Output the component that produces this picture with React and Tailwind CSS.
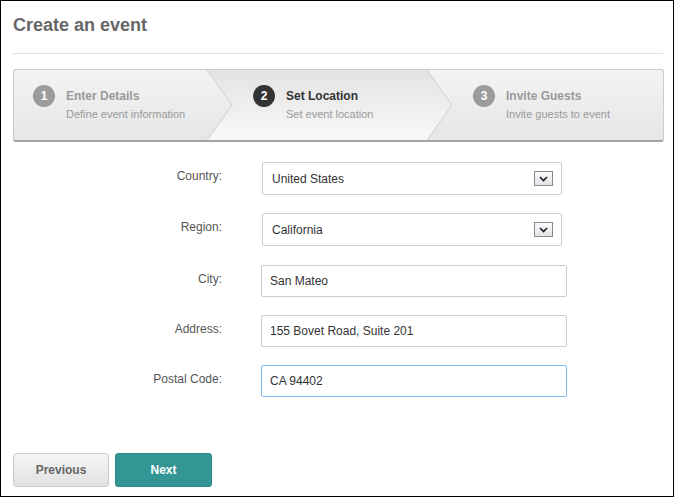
import React from "react";

const font = { fontFamily: '"Liberation Sans", Arial, sans-serif' };

function Circle({ n, dark }) {
  return (
    <div
      className={`w-[22px] h-[22px] rounded-full flex items-center justify-center text-white text-[12px] font-bold shrink-0 ${
        dark ? "bg-[#333333]" : "bg-[#9b9b9b]"
      }`}
    >
      {n}
    </div>
  );
}

function StepContent({ n, title, sub, active }) {
  return (
    <div className="flex items-start gap-[11px] pt-[15px]">
      <Circle n={n} dark={active} />
      <div className="flex flex-col">
        <div
          className={`text-[12px] font-bold leading-[22px] ${
            active ? "text-[#333333]" : "text-[#9a9a9a]"
          }`}
        >
          {title}
        </div>
        <div className="text-[11px] leading-[14px] text-[#9a9a9a]">{sub}</div>
      </div>
    </div>
  );
}

function SelectBox({ value }) {
  return (
    <div className="w-[300px] h-[33px] border border-[#cccccc] rounded-[2px] bg-white flex items-center justify-between pl-[9px] pr-[8px] ml-[1px]">
      <span className="text-[12px] text-[#333333]">{value}</span>
      <div className="w-[19px] h-[15px] border border-[#8a8a8a] bg-gradient-to-b from-[#fbfbfb] to-[#e4e4e4] flex items-center justify-center">
        <svg width="9" height="6" viewBox="0 0 9 6">
          <path d="M1 1 L4.5 4.5 L8 1" fill="none" stroke="#1a1a2e" strokeWidth="1.6" />
        </svg>
      </div>
    </div>
  );
}

function TextBox({ value, focused }) {
  return (
    <div
      className={`w-[306px] h-[32px] border rounded-[2px] bg-white flex items-center pl-[8px] ${
        focused ? "border-[#7fbcf3]" : "border-[#cccccc]"
      }`}
    >
      <span className="text-[12px] text-[#333333]">{value}</span>
    </div>
  );
}

function Row({ label, children, className = "" }) {
  return (
    <div className={`flex ${className}`}>
      <div className="w-[209px] text-right text-[12px] leading-[14px] pt-[7px] text-[#555555]">
        {label}
      </div>
      <div className="ml-[39px]">{children}</div>
    </div>
  );
}

export default function App() {
  return (
    <div style={font} className="w-[674px] h-[497px] border border-black bg-white px-[12px] pt-[13px] flex flex-col">
      <h1 className="text-[18px] font-bold leading-[22px] text-[#666666]">Create an event</h1>
      <div className="mt-[17px] h-px bg-[#e0e0e0] w-[650px]" />

      <div className="mt-[15px] w-[651px] h-[73px] border border-[#cccccc] border-b-2 border-b-[#a3a3a3] rounded-[3px] bg-gradient-to-b from-[#f3f3f3] to-[#e6e6e6] flex overflow-hidden">
        <div className="w-[193px] pl-[19px] shrink-0">
          <StepContent n="1" title="Enter Details" sub="Define event information" />
        </div>
        <div className="relative w-[245px] shrink-0 pl-[46px]">
          <div
            className="absolute inset-0 bg-gradient-to-b from-[#e3e3e3] to-[#f8f8f8]"
            style={{ clipPath: "polygon(0 0, 220px 0, 245px 50%, 220px 100%, 0 100%, 25px 50%)" }}
          />
          <svg className="absolute inset-0" width="245" height="70" viewBox="0 0 245 70">
            <polyline points="0,0 25,35 0,70" fill="none" stroke="#cfcfcf" strokeWidth="1" />
            <polyline points="220,0 245,35 220,70" fill="none" stroke="#cfcfcf" strokeWidth="1" />
          </svg>
          <div className="relative">
            <StepContent n="2" title="Set Location" sub="Set event location" active />
          </div>
        </div>
        <div className="flex-1 pl-[21px]">
          <StepContent n="3" title="Invite Guests" sub="Invite guests to event" />
        </div>
      </div>

      <div className="mt-[20px] flex flex-col">
        <Row label="Country:">
          <SelectBox value="United States" />
        </Row>
        <Row label="Region:" className="mt-[18px]">
          <SelectBox value="California" />
        </Row>
        <Row label="City:" className="mt-[19px]">
          <TextBox value="San Mateo" />
        </Row>
        <Row label="Address:" className="mt-[18px]">
          <TextBox value="155 Bovet Road, Suite 201" />
        </Row>
        <Row label="Postal Code:" className="mt-[18px]">
          <TextBox value="CA 94402" focused />
        </Row>
      </div>

      <div className="mt-[56px] flex gap-[6px]">
        <button className="w-[96px] h-[34px] border border-[#cccccc] rounded-[3px] bg-gradient-to-b from-[#f5f5f5] to-[#e1e1e1] text-[12px] font-bold text-[#666666]">
          Previous
        </button>
        <button className="w-[97px] h-[34px] border border-[#2e8a88] rounded-[3px] bg-[#339694] text-[12px] font-bold text-white">
          Next
        </button>
      </div>
    </div>
  );
}
